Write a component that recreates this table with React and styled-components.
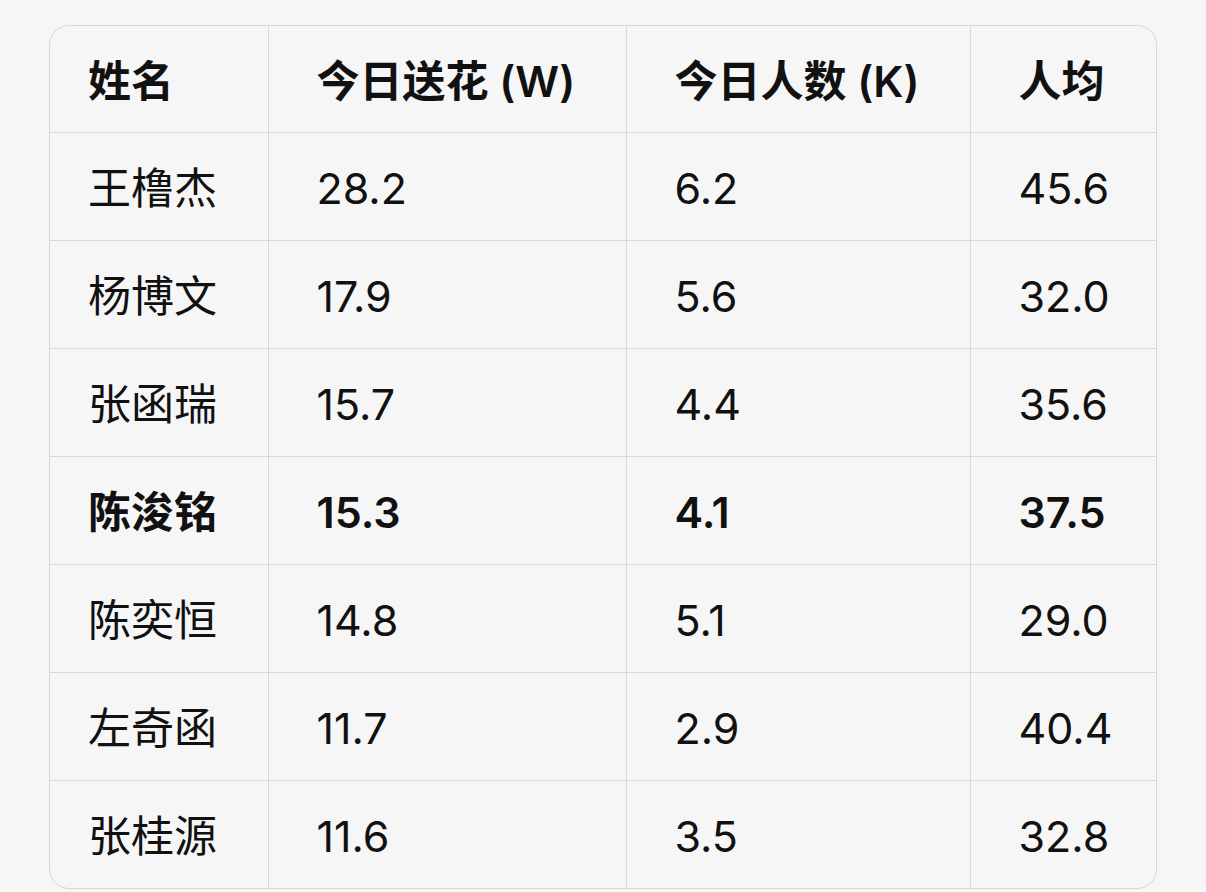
import React from "react";
import styled, { createGlobalStyle } from "styled-components";

const GlobalStyle = createGlobalStyle`
  html, body {
    margin: 0;
    background: #f6f6f6;
  }
  body {
    padding: 25px 49px;
    font-family: "Inter", "Noto Sans CJK SC", sans-serif;
    color: #111;
  }
`;

const Frame = styled.div`
  width: 1108px;
  border: 1.5px solid #d7d7d7;
  border-radius: 20px;
  overflow: hidden;
  box-sizing: border-box;
  background: #f6f6f6;
`;

const Table = styled.table`
  width: 100%;
  table-layout: fixed;
  border-collapse: collapse;
  font-size: 43px;
  line-height: 1;
`;

const Row = styled.tr`
  height: ${(p) => (p.$head ? "106px" : "108px")};
  border-top: ${(p) => (p.$head ? "none" : "1.5px solid #d9d9d9")};
`;

const Cell = styled.td`
  padding: 5px 0 0 ${(p) => p.$pad}px;
  font-weight: ${(p) => (p.$bold ? 600 : 400)};
  text-align: left;
  vertical-align: middle;
  white-space: nowrap;
  border-left: ${(p) => (p.$first ? "none" : "1.5px solid #d9d9d9")};
`;

const cols = [
  { w: 218, pad: 38 },
  { w: 358, pad: 48 },
  { w: 344, pad: 48 },
  { w: 188, pad: 48 },
];

const head = ["姓名", "今日送花 (W)", "今日人数 (K)", "人均"];

const rows = [
  ["王橹杰", "28.2", "6.2", "45.6"],
  ["杨博文", "17.9", "5.6", "32.0"],
  ["张函瑞", "15.7", "4.4", "35.6"],
  ["陈浚铭", "15.3", "4.1", "37.5", true],
  ["陈奕恒", "14.8", "5.1", "29.0"],
  ["左奇函", "11.7", "2.9", "40.4"],
  ["张桂源", "11.6", "3.5", "32.8"],
];

export default function App() {
  return (
    <>
      <GlobalStyle />
      <Frame>
        <Table>
          <colgroup>
            {cols.map((c, i) => (
              <col key={i} style={{ width: c.w }} />
            ))}
          </colgroup>
          <thead>
            <Row $head>
              {head.map((h, i) => (
                <Cell as="th" key={h} $pad={cols[i].pad} $first={i === 0} $bold>
                  {h}
                </Cell>
              ))}
            </Row>
          </thead>
          <tbody>
            {rows.map((r) => (
              <Row key={r[0]}>
                {r.slice(0, 4).map((v, i) => (
                  <Cell key={i} $pad={cols[i].pad} $first={i === 0} $bold={r[4]}>
                    {v}
                  </Cell>
                ))}
              </Row>
            ))}
          </tbody>
        </Table>
      </Frame>
    </>
  );
}
